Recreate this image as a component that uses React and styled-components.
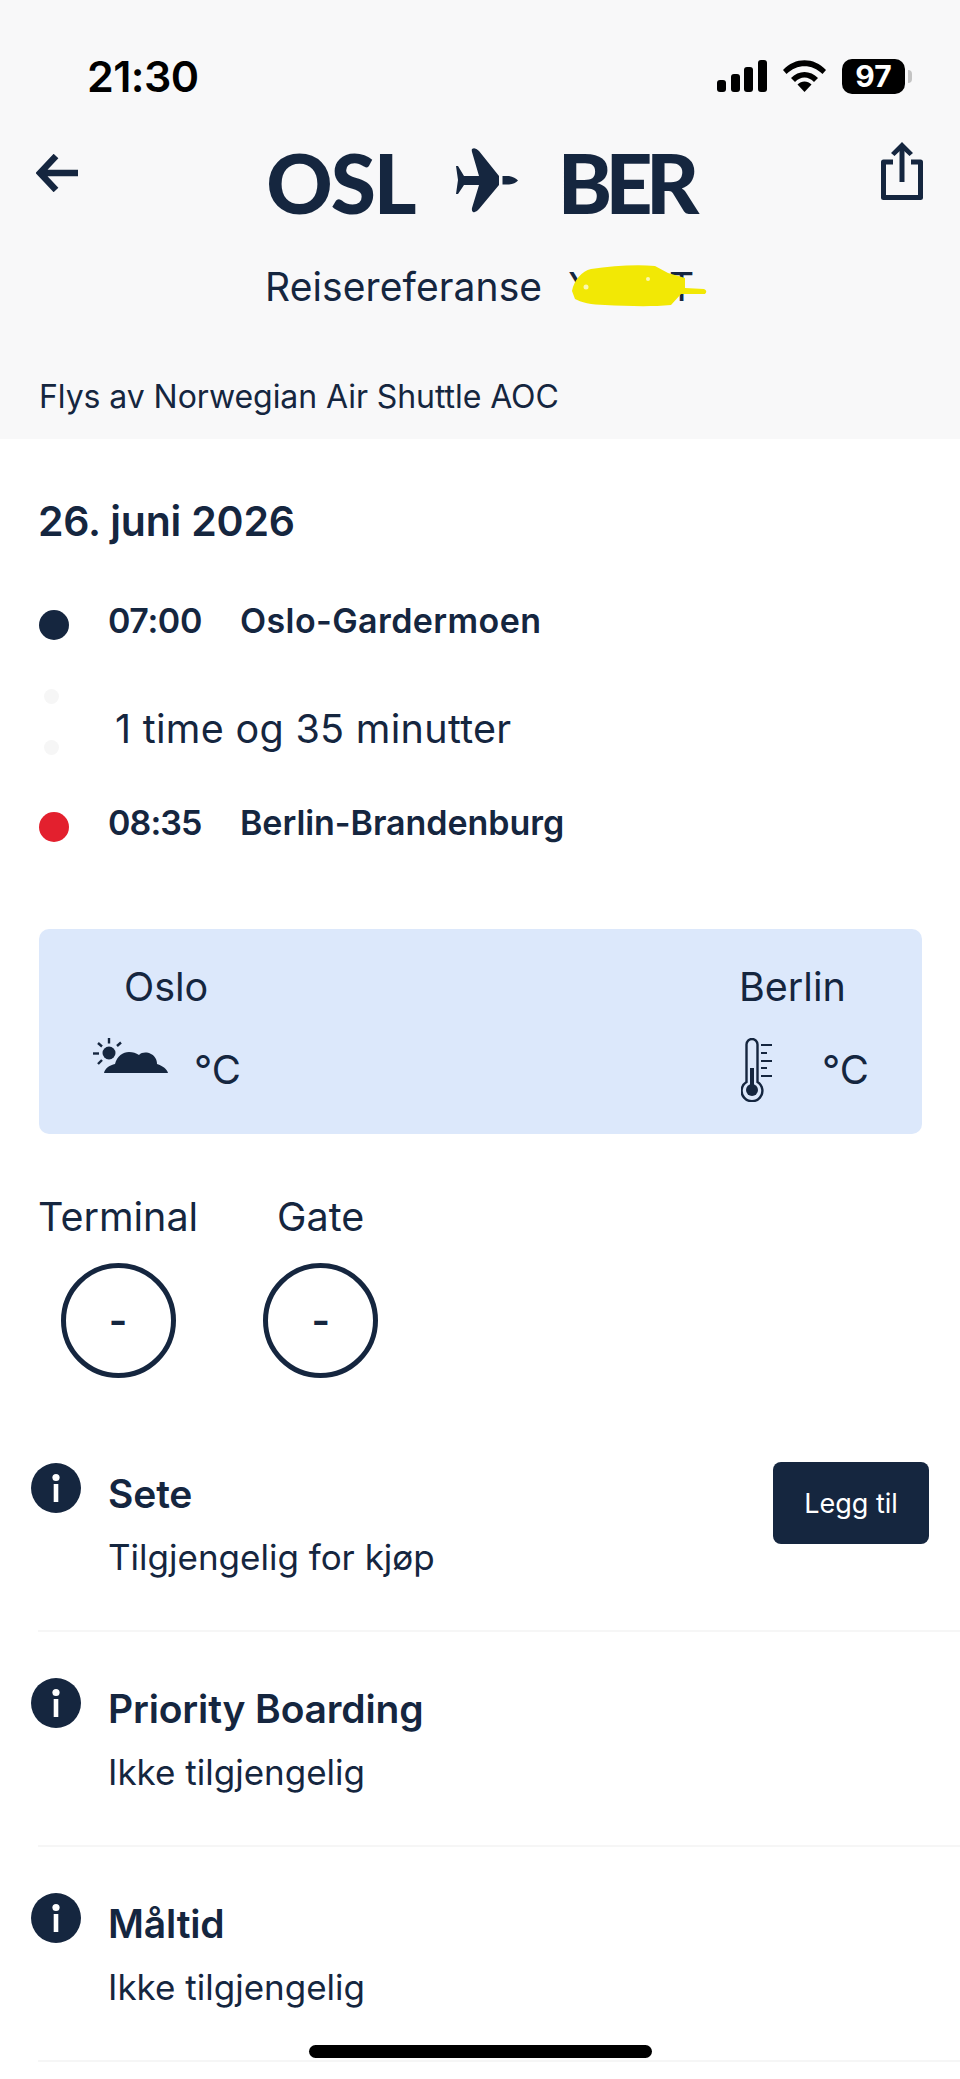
import React from "react";
import styled, { createGlobalStyle } from "styled-components";

const ink = "#15263f";

const Global = createGlobalStyle`
  html, body { margin: 0; padding: 0; background: #fff; }
  * { box-sizing: border-box; }
  body { font-family: Inter, "Noto Sans", sans-serif; color: ${ink}; }
`;

const Page = styled.div`
  position: relative;
  width: 960px;
  height: 2079px;
  overflow: hidden;
  background: #fff;
`;

const Header = styled.header`
  height: 439px;
  background: #f8f8f9;
  padding-top: 50px;
`;

const StatusBar = styled.div`
  height: 52px;
  padding: 0 55px 0 87px;
  display: flex;
  align-items: center;
  justify-content: space-between;
  color: #000;
`;

const Clock = styled.div`
  font-size: 43px;
  line-height: 52px;
  font-weight: 600;
  letter-spacing: -0.6px;
`;

const StatusIcons = styled.div`
  display: flex;
  align-items: center;
  gap: 16px;
`;

const Battery = styled.div`
  position: relative;
  width: 63px;
  height: 35px;
  border-radius: 10px;
  background: #000;
  color: #fff;
  font-size: 30px;
  line-height: 35px;
  font-weight: 700;
  text-align: center;
  &::after {
    content: "";
    position: absolute;
    right: -7px;
    top: 11px;
    width: 4px;
    height: 13px;
    border-radius: 0 4px 4px 0;
    background: #c4c4c4;
  }
`;

const NavRow = styled.div`
  margin-top: 38px;
  height: 85px;
  padding: 0 37px 0 36px;
  display: grid;
  grid-template-columns: 1fr auto 1fr;
  align-items: center;
`;

const BackButton = styled.div`
  justify-self: start;
  display: flex;
  margin-top: -19px;
`;

const ShareButton = styled.div`
  justify-self: end;
  display: flex;
  margin-top: -24px;
`;

const Route = styled.div`
  display: flex;
  align-items: center;
`;

const Airport = styled.span`
  font-family: Lato, Inter, sans-serif;
  font-size: 82px;
  line-height: 85px;
  font-weight: 900;
  letter-spacing: ${p => p.$tracking}px;
`;

const PlaneMark = styled.svg`
  margin: -4px 40px 0 40px;
  flex: none;
`;

const ReferenceRow = styled.div`
  margin-top: 37px;
  height: 50px;
  padding-left: 265px;
  display: flex;
  align-items: center;
  font-size: 39px;
  line-height: 50px;
  font-weight: 400;
  letter-spacing: 0.1px;
`;

const ReferenceCode = styled.span`
  position: relative;
  margin-left: 26px;
  width: 126px;
  display: flex;
  justify-content: space-between;
`;

const Scribble = styled.svg`
  position: absolute;
  left: 4px;
  top: 0;
  overflow: visible;
`;

const Operator = styled.div`
  margin-top: 63px;
  padding-left: 39px;
  font-size: 32px;
  line-height: 44px;
  font-weight: 400;
  letter-spacing: -0.07px;
`;

const Section = styled.section`
  padding: 0 38px;
`;

const DateTitle = styled.h2`
  margin: 57px 0 0 0;
  font-size: 41px;
  line-height: 50px;
  font-weight: 600;
  letter-spacing: -0.2px;
`;

const Stop = styled.div`
  margin-top: ${p => p.$top}px;
  height: 40px;
  display: flex;
  align-items: center;
  padding-left: 1px;
  font-size: 34px;
  line-height: 40px;
  font-weight: 600;
`;

const Dot = styled.span`
  width: 30px;
  height: 30px;
  border-radius: 50%;
  margin-top: 8px;
  background: ${p => p.$color};
  flex: none;
`;

const StopTime = styled.span`
  margin-left: 39px;
  width: 132px;
  letter-spacing: ${p => p.$tracking}px;
`;

const StopName = styled.span`
  letter-spacing: ${p => p.$tracking}px;
`;

const DurationRow = styled.div`
  margin-top: 48px;
  height: 66px;
  padding-left: 6px;
  display: flex;
  align-items: center;
  font-size: 39.5px;
  font-weight: 400;
`;

const FaintDots = styled.div`
  width: 16px;
  height: 66px;
  display: flex;
  flex-direction: column;
  justify-content: space-between;
  flex: none;
`;

const FaintDot = styled.span`
  width: 15px;
  height: 15px;
  border-radius: 50%;
  background: #f6f6f6;
`;

const Duration = styled.span`
  margin: 13px 0 0 55px;
  letter-spacing: 0.3px;
`;

const WeatherCard = styled.div`
  margin: 86px 0 0 1px;
  height: 205px;
  width: 883px;
  border-radius: 10px;
  background: #dce8fb;
  display: flex;
  justify-content: space-between;
  padding: 33px 53px 0 54px;
`;

const WeatherColumn = styled.div`
  display: flex;
  flex-direction: column;
`;

const City = styled.div`
  font-size: 39.5px;
  line-height: 50px;
  margin-left: ${p => p.$indent}px;
`;

const WeatherValue = styled.div`
  margin-top: ${p => p.$top}px;
  display: flex;
  align-items: flex-start;
  gap: ${p => p.$gap}px;
`;

const Degrees = styled.span`
  font-size: 40px;
  line-height: 48px;
  margin-top: ${p => p.$top}px;
`;

const Gates = styled.div`
  margin: 58px 0 0 0;
  display: flex;
  gap: 65px;
`;

const GateColumn = styled.div`
  display: flex;
  flex-direction: column;
  align-items: center;
`;

const GateLabel = styled.div`
  font-size: 39.5px;
  line-height: 50px;
`;

const GateCircle = styled.div`
  margin-top: 21px;
  width: 115px;
  height: 115px;
  border-radius: 50%;
  border: 5px solid ${ink};
  display: flex;
  align-items: center;
  justify-content: center;
  font-size: 40px;
  font-weight: 600;
  line-height: 1;
`;

const Extras = styled.div`
  margin-top: 39px;
`;

const ExtraRow = styled.div`
  position: relative;
  height: 215px;
  padding: 46px 31px 0 31px;
  display: flex;
  align-items: flex-start;
  &::after {
    content: "";
    position: absolute;
    left: 38px;
    right: 0;
    bottom: 0;
    height: 2px;
    background: #f6f6f6;
  }
`;

const InfoIcon = styled.svg`
  flex: none;
  display: block;
`;

const ExtraText = styled.div`
  margin-left: 27px;
  flex: 1;
`;

const ExtraTitle = styled.div`
  margin-top: 7px;
  font-size: 39px;
  line-height: 48px;
  font-weight: 600;
  letter-spacing: -0.15px;
`;

const ExtraStatus = styled.div`
  margin-top: 17px;
  font-size: 35px;
  line-height: 44px;
  font-weight: 400;
`;

const AddButton = styled.div`
  width: 156px;
  height: 82px;
  border-radius: 8px;
  background: ${ink};
  color: #fff;
  display: flex;
  align-items: center;
  justify-content: center;
  font-size: 27px;
  font-weight: 400;
  margin-top: -1px;
`;

const HomeIndicator = styled.div`
  position: absolute;
  left: 309px;
  top: 2045px;
  width: 343px;
  height: 13px;
  border-radius: 7px;
  background: #000;
`;

const extras = [
  { title: "Sete", status: "Tilgjengelig for kjøp", action: "Legg til" },
  { title: "Priority Boarding", status: "Ikke tilgjengelig" },
  { title: "Måltid", status: "Ikke tilgjengelig" },
];

const Info = () => (
  <InfoIcon width="50" height="50" viewBox="0 0 50 50">
    <circle cx="25" cy="25" r="25" fill={ink} />
    <circle cx="25" cy="14.5" r="3.6" fill="#fff" />
    <rect x="22.7" y="21" width="4.6" height="18" fill="#fff" />
  </InfoIcon>
);

export default function App() {
  return (
    <Page>
      <Global />
      <Header>
        <StatusBar>
          <Clock>21:30</Clock>
          <StatusIcons>
            <svg width="50" height="32" viewBox="0 0 50 32">
              <rect x="0" y="20" width="9" height="12" rx="3" fill="#000" />
              <rect x="14" y="14" width="9" height="18" rx="3" fill="#000" />
              <rect x="27" y="7" width="9" height="25" rx="3" fill="#000" />
              <rect x="41" y="0" width="9" height="32" rx="3" fill="#000" />
            </svg>
            <svg width="43" height="32" viewBox="0 0 43 32">
              <path d="M0 10 C12 -3 31 -3 43 10 L39.5 14 C29 3.5 14 3.5 3.5 14 Z" fill="#000" />
              <path d="M8 18 C15.5 10 27.5 10 35 18 L31 22 C25.5 16 17.5 16 12 22 Z" fill="#000" />
              <path d="M14.5 24.5 C18.5 20.5 24.5 20.5 28.5 24.5 L21.5 32 Z" fill="#000" />
            </svg>
            <Battery>97</Battery>
          </StatusIcons>
        </StatusBar>

        <NavRow>
          <BackButton>
            <svg width="42" height="38" viewBox="0 0 42 38">
              <path d="M20 2 L4 19 L20 36 M4 19 H42" fill="none" stroke={ink} strokeWidth="6.5" />
            </svg>
          </BackButton>
          <Route>
            <Airport $tracking={-2}>OSL</Airport>
            <PlaneMark width="63" height="65" viewBox="0 0 63 65">
              <path
                d="M44 28 L24 3 Q20 -1 17 1 Q16.5 2 17 4 L24 28 L9 28 L3 18 H1 L3 32 L1 46 H3 L9 37 L24 37 L17 60 Q16.5 63 18 64 Q21 65 24 61 L44 37 Z"
                fill={ink}
              />
              <path d="M47.5 28 H54 Q60 29 63 32.5 Q60 36 54 36.5 H47.5 Z" fill={ink} />
            </PlaneMark>
            <Airport $tracking={-6.5}>BER</Airport>
          </Route>
          <ShareButton>
            <svg width="42" height="58" viewBox="0 0 42 58">
              <path d="M12 20 H2.5 V55.5 H39.5 V20 H30" fill="none" stroke={ink} strokeWidth="5" strokeLinejoin="round" />
              <path d="M21 40 V3" fill="none" stroke={ink} strokeWidth="5" />
              <path d="M21 0 L32 11 L28.5 14 L21 7 L13.5 14 L10 11 Z" fill={ink} />
            </svg>
          </ShareButton>
        </NavRow>

        <ReferenceRow>
          Reisereferanse
          <ReferenceCode>
            <span>Y</span>
            <span>T</span>
            <Scribble width="134" height="50" viewBox="0 0 134 50">
              <path
                d="M0 29 C2 18 10 9 19 7 C40 4 64 2 83 4 L96 11 L113 16 L113 26 L132 27 Q136 29 133 32 L109 32 L99 43 C78 45 54 44 33 43 C20 43 8 40 3 37 Z"
                fill="#f2e805"
              />
              <circle cx="14" cy="25" r="2.5" fill="#fbf8b0" />
              <circle cx="76" cy="17" r="2" fill="#fbf8b0" />
            </Scribble>
          </ReferenceCode>
        </ReferenceRow>

        <Operator>Flys av Norwegian Air Shuttle AOC</Operator>
      </Header>

      <Section>
        <DateTitle>26. juni 2026</DateTitle>

        <Stop $top={55}>
          <Dot $color={ink} />
          <StopTime $tracking={-0.4}>07:00</StopTime>
          <StopName $tracking={0.4}>Oslo-Gardermoen</StopName>
        </Stop>

        <DurationRow>
          <FaintDots>
            <FaintDot />
            <FaintDot />
          </FaintDots>
          <Duration>1 time og 35 minutter</Duration>
        </DurationRow>

        <Stop $top={48}>
          <Dot $color="#e3202e" />
          <StopTime $tracking={-0.9}>08:35</StopTime>
          <StopName $tracking={-0.05}>Berlin-Brandenburg</StopName>
        </Stop>

        <WeatherCard>
          <WeatherColumn>
            <City $indent={31}>Oslo</City>
            <WeatherValue $top={26} $gap={21}>
              <svg width="80" height="36" viewBox="0 0 80 36">
                <circle cx="16" cy="15" r="6.5" fill={ink} />
                <g stroke={ink} strokeWidth="2.4" fill="none">
                  <path d="M16 0 V5.5" />
                  <path d="M5 5 L9 8.5" />
                  <path d="M28 4.5 L24 8" />
                  <path d="M0 15.5 H6" />
                  <path d="M5 26 L9 22" />
                </g>
                <path
                  d="M11 35 C12 30 17 27 22 26 C24 18 30 14 36 14 C40 14 43 15 46 17 C49 14 54 14 58 16 C62 18 64 22 64 26 C70 28 74 31 75 35 Z"
                  fill={ink}
                />
              </svg>
              <Degrees $top={8}>°C</Degrees>
            </WeatherValue>
          </WeatherColumn>
          <WeatherColumn>
            <City $indent={-2}>Berlin</City>
            <WeatherValue $top={26} $gap={50}>
              <svg width="31" height="64" viewBox="0 0 31 64">
                <path
                  d="M5.5 44 V6.5 A5.5 5.5 0 0 1 16.5 6.5 V44 A10.4 10.4 0 1 1 5.5 44 Z"
                  fill="none"
                  stroke={ink}
                  strokeWidth="2.4"
                />
                <rect x="9" y="30" width="4" height="20" fill={ink} />
                <circle cx="11" cy="52" r="6" fill={ink} />
                <g stroke={ink} strokeWidth="2">
                  <path d="M20 7 H31" />
                  <path d="M20 15 H26" />
                  <path d="M20 23 H31" />
                  <path d="M20 30 H26" />
                  <path d="M20 38 H31" />
                </g>
              </svg>
              <Degrees $top={8}>°C</Degrees>
            </WeatherValue>
          </WeatherColumn>
        </WeatherCard>

        <Gates>
          <GateColumn>
            <GateLabel>Terminal</GateLabel>
            <GateCircle>-</GateCircle>
          </GateColumn>
          <GateColumn>
            <GateLabel>Gate</GateLabel>
            <GateCircle>-</GateCircle>
          </GateColumn>
        </Gates>
      </Section>

      <Extras>
        {extras.map(item => (
          <ExtraRow key={item.title}>
            <Info />
            <ExtraText>
              <ExtraTitle>{item.title}</ExtraTitle>
              <ExtraStatus>{item.status}</ExtraStatus>
            </ExtraText>
            {item.action && <AddButton>{item.action}</AddButton>}
          </ExtraRow>
        ))}
      </Extras>

      <HomeIndicator />
    </Page>
  );
}
